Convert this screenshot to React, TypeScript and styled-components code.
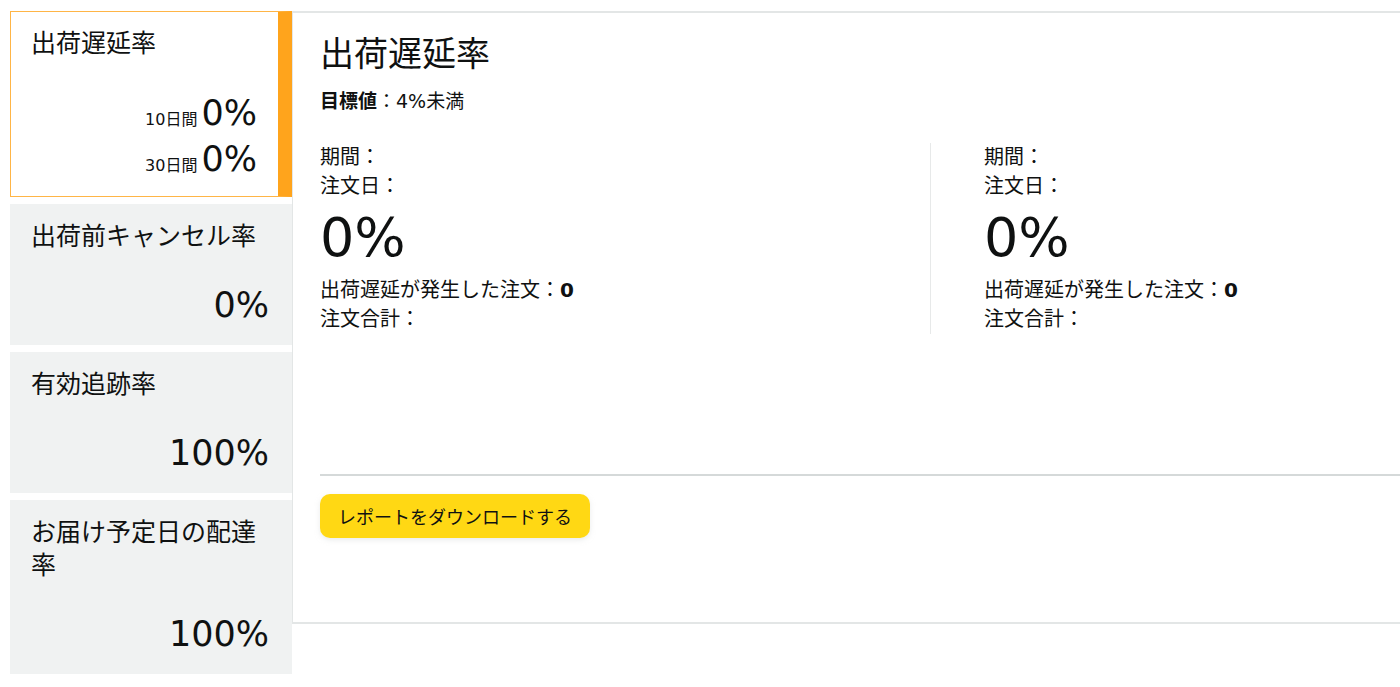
import React from "react";
import styled, { createGlobalStyle } from "styled-components";

const GlobalStyle = createGlobalStyle`
  html, body {
    margin: 0;
    padding: 0;
    background: #ffffff;
    overflow: hidden;
  }
  body {
    font-family: "DejaVu Sans", "Noto Sans CJK JP", sans-serif;
    color: #0f1111;
  }
`;

const Page = styled.div`
  display: flex;
  align-items: flex-start;
  width: 1440px;
  padding: 11px 0 0 10px;
  box-sizing: border-box;
`;

const Sidebar = styled.nav`
  width: 282px;
  flex: none;
  display: flex;
  flex-direction: column;
  gap: 7px;
`;

const Card = styled.div<{ $selected?: boolean }>`
  box-sizing: border-box;
  display: flex;
  flex-direction: column;
  padding: ${(p) => (p.$selected ? "15px 21px 14px 20px" : "16px 23px 20px 21px")};
  background: ${(p) => (p.$selected ? "#ffffff" : "#f0f2f2")};
  border: ${(p) => (p.$selected ? "1px solid #ffb546" : "none")};
  border-right: ${(p) => (p.$selected ? "14px solid #ffa41c" : "none")};
`;

const CardTitle = styled.div`
  font-size: 25px;
  line-height: 33px;
`;

const CardValue = styled.div`
  margin-top: 32px;
  font-size: 35px;
  line-height: 40px;
  text-align: right;
`;

const PeriodRows = styled.div`
  margin-top: 30px;
`;

const PeriodRow = styled.div`
  font-size: 35px;
  line-height: 46px;
  text-align: right;
`;

const PeriodLabel = styled.span`
  font-size: 16px;
  line-height: 1;
  margin-right: 4px;
`;

const Panel = styled.main`
  flex: 1;
  box-sizing: border-box;
  border-top: 2px solid #e3e6e6;
  border-left: 1px solid #e3e6e6;
  border-bottom: 2px solid #e3e6e6;
  padding: 20px 0 84px 27px;
`;

const PanelTitle = styled.h1`
  margin: 0;
  font-size: 34px;
  line-height: 42px;
  font-weight: normal;
`;

const Goal = styled.div`
  margin-top: 12px;
  font-size: 19px;
  line-height: 28px;
`;

const Strong = styled.b`
  font-weight: bold;
`;

const Columns = styled.div`
  margin-top: 28px;
  display: grid;
  grid-template-columns: 610px 1fr;
`;

const Column = styled.section<{ $divided?: boolean }>`
  padding-left: ${(p) => (p.$divided ? "53px" : "0")};
  border-left: ${(p) => (p.$divided ? "1px solid #e7e9e9" : "none")};
`;

const InfoLine = styled.div<{ $gap?: number }>`
  font-size: 20px;
  line-height: 29px;
  margin-top: ${(p) => p.$gap ?? 0}px;
`;

const BigRate = styled.div`
  margin-top: 5px;
  font-size: 54px;
  line-height: 64px;
`;

const Rule = styled.hr`
  margin: 140px 0 0;
  border: none;
  border-top: 2px solid #d5d9d9;
`;

const DownloadButton = styled.button`
  margin-top: 18px;
  height: 44px;
  padding: 0 18px;
  border: none;
  border-radius: 10px;
  background: #ffd814;
  box-shadow: 0 2px 5px rgba(213, 217, 217, 0.5);
  font-family: "DejaVu Sans", "Noto Sans CJK JP", sans-serif;
  font-size: 18px;
  color: #0f1111;
  cursor: pointer;
`;

const metrics = [
  { title: "出荷前キャンセル率", value: "0%" },
  { title: "有効追跡率", value: "100%" },
  { title: "お届け予定日の配達率", value: "100%" },
];

const DetailColumn: React.FC<{ divided?: boolean }> = ({ divided }) => (
  <Column $divided={divided}>
    <InfoLine>期間：</InfoLine>
    <InfoLine>注文日：</InfoLine>
    <BigRate>0%</BigRate>
    <InfoLine $gap={6}>
      出荷遅延が発生した注文：<Strong>0</Strong>
    </InfoLine>
    <InfoLine>注文合計：</InfoLine>
  </Column>
);

export default function App() {
  return (
    <>
      <GlobalStyle />
      <Page>
        <Sidebar>
          <Card $selected>
            <CardTitle>出荷遅延率</CardTitle>
            <PeriodRows>
              <PeriodRow>
                <PeriodLabel>10日間</PeriodLabel>0%
              </PeriodRow>
              <PeriodRow>
                <PeriodLabel>30日間</PeriodLabel>0%
              </PeriodRow>
            </PeriodRows>
          </Card>
          {metrics.map((m) => (
            <Card key={m.title}>
              <CardTitle>{m.title}</CardTitle>
              <CardValue>{m.value}</CardValue>
            </Card>
          ))}
        </Sidebar>
        <Panel>
          <PanelTitle>出荷遅延率</PanelTitle>
          <Goal>
            <Strong>目標値</Strong>：4%未満
          </Goal>
          <Columns>
            <DetailColumn />
            <DetailColumn divided />
          </Columns>
          <Rule />
          <DownloadButton>レポートをダウンロードする</DownloadButton>
        </Panel>
      </Page>
    </>
  );
}
